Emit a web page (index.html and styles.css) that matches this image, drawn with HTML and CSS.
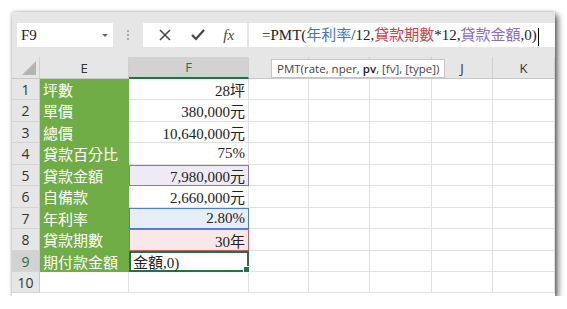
FILE: index.html
```html
<!DOCTYPE html>
<html>
<head>
	<title>PMT</title>
	<link rel="stylesheet" href="styles.css">
</head>
<body>
	<div class="window">
		<div class="toolbar">
			<div class="namebox">
				<span>F9</span>
				<span class="caret"></span>
			</div>
			<div class="dots"><i></i><i></i><i></i></div>
			<div class="buttons">
				<svg class="btn" width="14" height="14" viewBox="0 0 14 14"><path d="M2 2 L12 12 M12 2 L2 12" stroke="#444" stroke-width="1.5" fill="none"/></svg>
				<svg class="btn" width="16" height="14" viewBox="0 0 16 14"><path d="M2 7 L6 11 L14 2" stroke="#444" stroke-width="2.2" fill="none"/></svg>
				<span class="fx">fx</span>
			</div>
			<div class="formula">=PMT(<span class="c-blue">年利率</span>/12,<span class="c-red">貸款期數</span>*12,<span class="c-purple">貸款金額</span>,0)<span class="cursor"></span></div>
		</div>

		<div class="sheet">
			<div class="hd corner"><span class="tri"></span></div>
			<div class="hd">E</div>
			<div class="hd sel-col">F</div>
			<div class="hd"></div>
			<div class="hd"></div>
			<div class="hd"></div>
			<div class="hd">J</div>
			<div class="hd">K</div>

			<div class="rh">1</div><div class="lbl">坪數</div><div class="val">28坪</div><div></div><div></div><div></div><div></div><div></div>
			<div class="rh">2</div><div class="lbl">單價</div><div class="val">380,000元</div><div></div><div></div><div></div><div></div><div></div>
			<div class="rh">3</div><div class="lbl">總價</div><div class="val">10,640,000元</div><div></div><div></div><div></div><div></div><div></div>
			<div class="rh">4</div><div class="lbl">貸款百分比</div><div class="val">75%</div><div></div><div></div><div></div><div></div><div></div>
			<div class="rh">5</div><div class="lbl">貸款金額</div><div class="val ref-purple">7,980,000元</div><div></div><div></div><div></div><div></div><div></div>
			<div class="rh">6</div><div class="lbl">自備款</div><div class="val">2,660,000元</div><div></div><div></div><div></div><div></div><div></div>
			<div class="rh">7</div><div class="lbl">年利率</div><div class="val ref-blue">2.80%</div><div></div><div></div><div></div><div></div><div></div>
			<div class="rh">8</div><div class="lbl">貸款期數</div><div class="val ref-red">30年</div><div></div><div></div><div></div><div></div><div></div>
			<div class="rh sel-row">9</div><div class="lbl">期付款金額</div><div class="val editing">金額,0)<span class="handle"></span></div><div></div><div></div><div></div><div></div><div></div>
			<div class="rh">10</div><div class="blank"></div><div></div><div></div><div></div><div></div><div></div><div></div>
		</div>

		<div class="tip">PMT(rate, nper, <b>pv</b>, [fv], [type])</div>
	</div>
</body>
</html>
```

FILE: styles.css
```css
body {
	margin: 0;
	padding: 0;
	background: #fff;
	font-family: "Liberation Serif", "Noto Sans CJK TC", serif;
}
.window {
	position: relative;
	width: 543px;
	height: 284px;
	margin: 12px 0 0 12px;
	background: #fff;
	overflow: hidden;
	box-shadow: 3px 3px 6px rgba(0, 0, 0, 0.6), 0 0 3px rgba(0, 0, 0, 0.25);
}
.toolbar {
	display: flex;
	align-items: flex-start;
	height: 45px;
	padding: 11px 0 0 5px;
	box-sizing: border-box;
	background: #e6e6e6;
}
.namebox {
	display: flex;
	align-items: center;
	justify-content: space-between;
	width: 96px;
	height: 24px;
	padding: 0 5px 0 4px;
	box-sizing: border-box;
	background: #fff;
	font-size: 15px;
	color: #222;
}
.caret {
	width: 0;
	height: 0;
	border-left: 3px solid transparent;
	border-right: 3px solid transparent;
	border-top: 3px solid #666;
}
.dots {
	display: flex;
	flex-direction: column;
	align-items: center;
	gap: 2px;
	width: 30px;
	padding-top: 7px;
}
.dots i {
	width: 2px;
	height: 2px;
	background: #a8a8a8;
}
.buttons {
	display: flex;
	align-items: center;
	justify-content: space-around;
	width: 104px;
	height: 24px;
	padding: 0 4px 0 6px;
	box-sizing: border-box;
	background: #fff;
}
.fx {
	font-style: italic;
	font-size: 15px;
	color: #444;
}
.formula {
	flex: 1;
	height: 24px;
	margin-left: 2px;
	padding-left: 13px;
	box-sizing: border-box;
	background: #fff;
	font-size: 15px;
	line-height: 24px;
	color: #222;
	white-space: nowrap;
}
.c-blue { color: #3f78c8; }
.c-red { color: #c8414b; }
.c-purple { color: #8a6cc8; }
.cursor {
	display: inline-block;
	width: 1px;
	height: 18px;
	margin-left: 1px;
	vertical-align: middle;
	background: #000;
}
.sheet {
	display: grid;
	grid-template-columns: 28px 89px 120px 60px 61px 62px 61px 62px;
	grid-template-rows: 22px 21px 22px 21px 22px 21px 22px 21px 22px 21px 21px;
}
.sheet > div {
	box-sizing: border-box;
	border-right: 1px solid #e1e1e1;
	border-bottom: 1px solid #e1e1e1;
}
.sheet > .hd {
	display: flex;
	align-items: center;
	justify-content: center;
	background: #e6e6e6;
	border-right: 1px solid #d0d0d0;
	border-bottom: 1px solid #c8c8c8;
	font-family: "Open Sans", "Liberation Sans", sans-serif;
	font-size: 13px;
	color: #333;
}
.corner {
	position: relative;
}
.tri {
	position: absolute;
	right: 3px;
	bottom: 3px;
	width: 0;
	height: 0;
	border-left: 14px solid transparent;
	border-bottom: 14px solid #b4b4b4;
}
.sheet > .sel-col {
	background: #d2d2d2;
	border-bottom: 2px solid #217346;
	color: #217346;
}
.sheet > .rh {
	display: flex;
	align-items: center;
	justify-content: center;
	background: #e6e6e6;
	border-right: 1px solid #c8c8c8;
	border-bottom: 1px solid #d4d4d4;
	font-family: "Open Sans", "Liberation Sans", sans-serif;
	font-size: 14px;
	color: #333;
}
.sheet > .sel-row {
	background: #d2d2d2;
	color: #217346;
}
.sheet > .lbl {
	display: flex;
	align-items: center;
	padding-left: 3px;
	background: #70ad47;
	border-color: #70ad47;
	color: #fff;
	font-size: 15px;
	white-space: nowrap;
}
.sheet > .val {
	display: flex;
	align-items: center;
	justify-content: flex-end;
	padding-right: 3px;
	font-size: 15px;
	color: #222;
	white-space: nowrap;
}
.sheet > .ref-purple {
	background: #efebf6;
	border: 1px solid #8e71c8;
}
.sheet > .ref-blue {
	background: #e8eef9;
	border: 1px solid #4a7fd0;
}
.sheet > .ref-red {
	background: #fae8e8;
	border: 1px solid #cf5a5f;
}
.sheet > .editing {
	position: relative;
	justify-content: flex-start;
	padding-left: 2px;
	border: 2px solid #217346;
}
.handle {
	position: absolute;
	right: -3px;
	bottom: -3px;
	width: 5px;
	height: 5px;
	background: #217346;
	border: 1px solid #fff;
}
.tip {
	position: absolute;
	left: 259px;
	top: 47px;
	height: 17px;
	padding: 0 5px;
	background: #fff;
	border: 1px solid #c6c6c6;
	font-family: "Open Sans", "Liberation Sans", sans-serif;
	font-size: 11.5px;
	line-height: 17px;
	color: #444;
	white-space: nowrap;
}
.tip b {
	font-weight: 600;
	color: #222;
}
```
